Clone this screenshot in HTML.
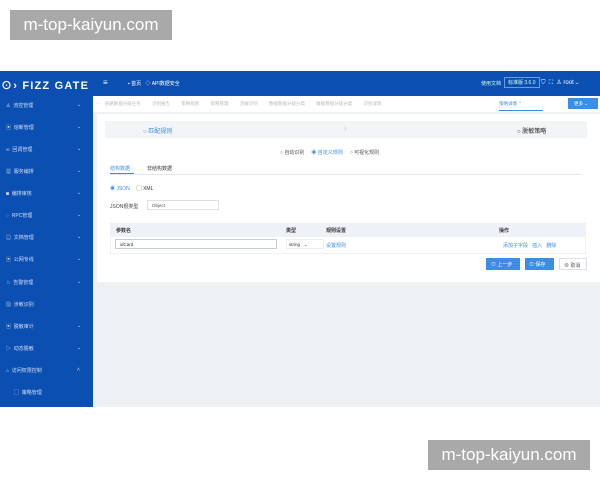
<!DOCTYPE html><html><head><meta charset="utf-8"><style>
*{margin:0;padding:0;box-sizing:border-box}
body{width:600px;height:480px;background:#fff;position:relative;font-family:"Liberation Sans","Noto Sans CJK SC",sans-serif;overflow:hidden;font-size:5px;color:#333}
.a{position:absolute}
.wm{background:#a9a9a9;color:#fff;font-size:17px;line-height:30px;text-align:center;width:162px;height:30px}
.hdr{left:0;top:71px;width:600px;height:25px;background:#0c4fb3}
.side{left:0;top:96px;width:93px;height:311px;background:#0c4fb3}
.main{left:93px;top:96px;width:507px;height:311px;background:#eef1f4}
.si{position:absolute;left:6px;color:#d3def3;font-size:5px;width:80px}
.si b{position:absolute;left:71px;font-weight:normal;font-size:5px}
.blue{color:#3a8ee6}
</style></head><body>
<div class="a wm" style="left:10px;top:10px">m-top-kaiyun.com</div>
<div class="a wm" style="left:428px;top:440px">m-top-kaiyun.com</div>
<div class="a hdr">
 <div class="a" style="left:1px;top:6px;color:#fff;font-size:11px;font-weight:bold;letter-spacing:1.2px">⊙› FIZZ GATE</div>
 <div class="a" style="left:103px;top:7px;color:#fff;font-size:8px">≡</div>
 <div class="a" style="left:128px;top:9px;color:#fff">▪ 首页 &nbsp; ◇ API数据安全</div>
 <div class="a" style="left:481px;top:9px;color:#cfe">使用文档</div>
 <div class="a" style="left:504px;top:6px;border:1px solid #6a9be0;color:#cfe;padding:1px 3px;font-size:5px">标准版 3.6.0</div>
 <div class="a" style="left:541px;top:8px;color:#fff;font-size:6px">⛉ &nbsp;⛶ &nbsp;♙ root ⌄</div>
</div>
<div class="a side">
 <div class="si" style="top:6px">♙ &nbsp;流控管理<b>⌄</b></div>
 <div class="si" style="top:28px">▣ &nbsp;熔断管理<b>⌄</b></div>
 <div class="si" style="top:50px">∞ &nbsp;回调管理<b>⌄</b></div>
 <div class="si" style="top:72px">▦ &nbsp;服务编排<b>⌄</b></div>
 <div class="si" style="top:94px">◙ &nbsp;编排审核<b>⌄</b></div>
 <div class="si" style="top:116px">◌ &nbsp;RPC管理<b>⌄</b></div>
 <div class="si" style="top:138px">▤ &nbsp;文档管理<b>⌄</b></div>
 <div class="si" style="top:160px">▣ &nbsp;公网专线<b>⌄</b></div>
 <div class="si" style="top:183px">♘ &nbsp;告警管理<b>⌄</b></div>
 <div class="si" style="top:205px">▨ &nbsp;涉敏识别</div>
 <div class="si" style="top:227px">▣ &nbsp;脱敏审计<b>⌄</b></div>
 <div class="si" style="top:249px">▷ &nbsp;动态脱敏<b>⌄</b></div>
 <div class="si" style="top:271px">⌂ &nbsp;访问权限控制<b>˄</b></div>
 <div class="si" style="top:293px;left:14px">▢ &nbsp;策略管理</div>
</div>
<div class="a main">
 <div class="a" style="left:0;top:0;width:507px;height:16px;background:#fff;color:#bbb;font-size:4.5px">
  <span class="a" style="left:4px;top:5px">‹ &nbsp; &nbsp; 链路数据分级任务 &nbsp; &nbsp; &nbsp; &nbsp; 识别报告 &nbsp; &nbsp; &nbsp; &nbsp; 策略规则 &nbsp; &nbsp; &nbsp; &nbsp; 策略管理 &nbsp; &nbsp; &nbsp; &nbsp; 涉敏识别 &nbsp; &nbsp; &nbsp; &nbsp; 数据数据分级分类 &nbsp; &nbsp; &nbsp; &nbsp; 数据数据分级分类 &nbsp; &nbsp; &nbsp; &nbsp; 识别详情</span>
  <span class="a blue" style="left:406px;top:5px">策略详情 ⌃</span>
  <div class="a" style="left:406px;top:14px;width:44px;height:1px;background:#3a8ee6"></div>
  <div class="a" style="left:475px;top:2px;width:30px;height:11px;background:#3a8ee6;color:#fff;padding:3px 6px">更多 ⌄</div>
 </div>
 <div class="a" style="left:4px;top:18px;width:503px;height:168px;background:#fff">
  <div class="a" style="left:8px;top:7px;width:482px;height:17px;background:#f2f4f7"></div>
  <div class="a blue" style="left:46px;top:12px;font-size:6px">○ 匹配规则</div>
  <div class="a" style="left:247px;top:10px;color:#ccc;font-size:8px">›</div>
  <div class="a" style="left:420px;top:12px;font-size:6px;color:#222">○ 脱敏策略</div>
  <div class="a" style="left:183px;top:35px;color:#555">○ 自动识别 &nbsp; &nbsp; <span class="blue">◉ 自定义规则</span> &nbsp; &nbsp; ○ 可视化规则</div>
  <div class="a blue" style="left:13px;top:51px">结构数据</div>
  <div class="a" style="left:50px;top:51px;color:#333">非结构数据</div>
  <div class="a" style="left:13px;top:59px;width:24px;height:1px;background:#3a8ee6"></div>
  <div class="a" style="left:13px;top:60px;width:472px;height:1px;background:#e4e7ed"></div>
  <div class="a" style="left:13px;top:71px"><span class="blue">◉ JSON</span> &nbsp; &nbsp; ▢ XML</div>
  <div class="a" style="left:13px;top:89px;color:#444">JSON根类型</div>
  <div class="a" style="left:50px;top:86px;width:72px;height:10px;border:1px solid #dcdfe6;color:#555;padding:2px 4px;font-size:4.5px">Object</div>
  <div class="a" style="left:13px;top:109px;width:476px;height:14px;background:#eef1f5"></div>
  <div class="a" style="left:13px;top:109px;width:476px;height:31px;border:1px solid #eef1f5"></div>
  <div class="a" style="left:19px;top:113px;font-weight:bold">参数名</div>
  <div class="a" style="left:189px;top:113px;font-weight:bold">类型</div>
  <div class="a" style="left:229px;top:113px;font-weight:bold">规则设置</div>
  <div class="a" style="left:402px;top:113px;font-weight:bold">操作</div>
  <div class="a" style="left:18px;top:125px;width:162px;height:10px;border:1px solid #c8ccd4;padding:2px 4px;font-size:4.5px">idCard</div>
  <div class="a" style="left:189px;top:125px;width:38px;height:10px;border:1px solid #eee;padding:2px 2px;font-size:4.5px">string &nbsp; ⌄</div>
  <div class="a blue" style="left:229px;top:128px">设置规则</div>
  <div class="a blue" style="left:406px;top:128px">添加子字段 &nbsp; 插入 &nbsp; 删除</div>
  <div class="a" style="left:389px;top:144px;width:34px;height:12px;background:#3a8ee6;color:#fff;padding:3px 5px">⊙ 上一步</div>
  <div class="a" style="left:428px;top:144px;width:29px;height:12px;background:#3a8ee6;color:#fff;padding:3px 4px">⊙ 保存</div>
  <div class="a" style="left:462px;top:144px;width:28px;height:12px;border:1px solid #dcdfe6;color:#555;padding:3px 4px">⊗ 取消</div>
 </div>
</div>
</body></html>
